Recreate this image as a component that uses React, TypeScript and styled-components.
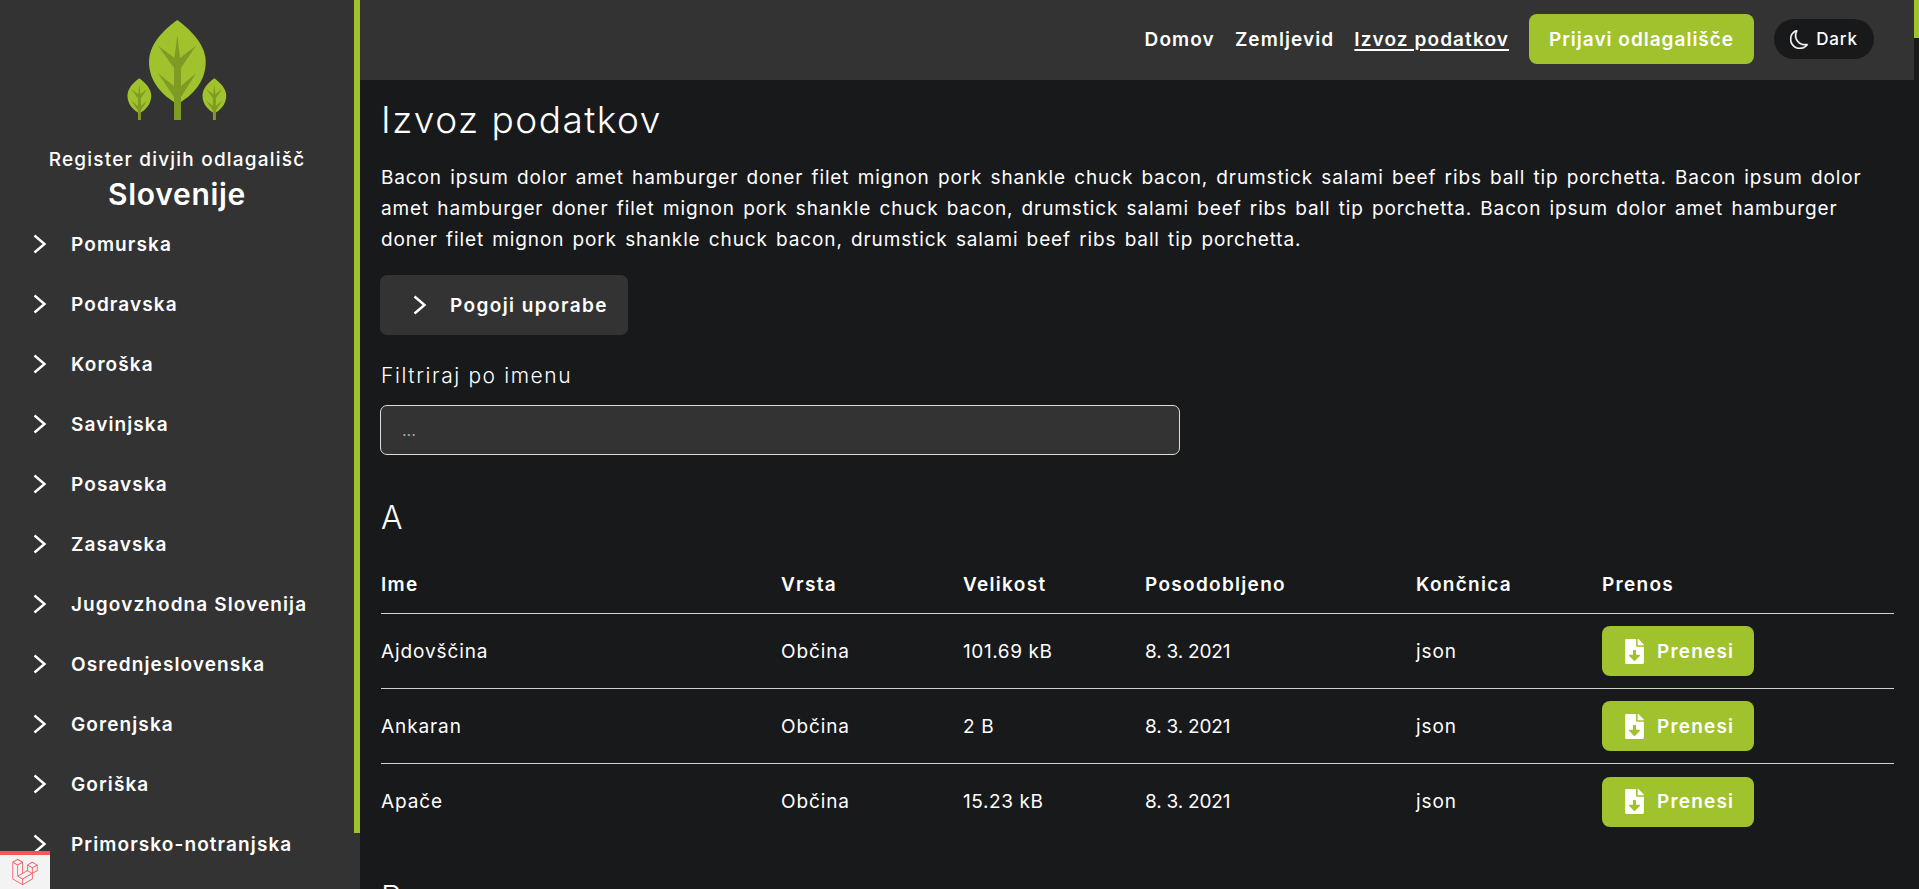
import React from 'react';
import styled, { createGlobalStyle } from 'styled-components';
import { BsMoon } from 'react-icons/bs';
import { FaFileDownload } from 'react-icons/fa';
import { SiLaravel } from 'react-icons/si';

const green = '#a0c22d';
const panel = '#333333';
const page = '#18191b';

const GlobalStyle = createGlobalStyle`
    * {
        box-sizing: border-box;
    }
    html, body {
        margin: 0;
        height: 100%;
        overflow: hidden;
        background: ${page};
        color: #fff;
        font-family: Inter, "Open Sans", "DejaVu Sans", sans-serif;
    }
`;

const Layout = styled.div`
    display: flex;
    height: 100vh;
`;

const Sidebar = styled.aside`
    position: relative;
    flex: 0 0 360px;
    height: 100%;
    overflow: hidden;
    background: ${panel};
    padding: 20px 6px 0 0;
`;

// the page's slim green scrollbars
const ScrollThumb = styled.div<{ $width: number; $height: number }>`
    position: absolute;
    top: 0;
    right: 0;
    width: ${p => p.$width}px;
    height: ${p => p.$height}px;
    background: ${green};
`;

const Brand = styled.div`
    display: flex;
    flex-direction: column;
    align-items: center;
    padding-bottom: 2px;
`;

const BrandLine = styled.div`
    margin-top: 28px;
    font-size: 19px;
    line-height: 24px;
    font-weight: 500;
    letter-spacing: 1.2px;
    white-space: nowrap;
`;

const BrandName = styled.div`
    margin-top: 4px;
    font-size: 30px;
    line-height: 36px;
    font-weight: 600;
    letter-spacing: 0.7px;
`;

const RegionItem = styled.a`
    display: flex;
    align-items: center;
    height: 60px;
    padding-left: 33px;
    gap: 24px;
    font-size: 19px;
    font-weight: 600;
    letter-spacing: 1.1px;
`;

const Main = styled.main`
    position: relative;
    flex: 1;
    min-width: 0;
    height: 100%;
    overflow: hidden;
    padding-right: 5px;
`;

const Header = styled.header`
    display: flex;
    align-items: center;
    justify-content: flex-end;
    height: 80px;
    padding: 0 40px 2px 0;
    background: ${panel};
`;

const NavLink = styled.a<{ $active?: boolean }>`
    margin-right: 20px;
    font-size: 19px;
    font-weight: 600;
    letter-spacing: 1.1px;
    text-decoration: ${p => (p.$active ? 'underline' : 'none')};
    text-decoration-thickness: 2px;
    text-underline-offset: 3px;
`;

const ReportButton = styled.button`
    width: 225px;
    height: 50px;
    border: 0;
    border-radius: 8px;
    background: ${green};
    color: #fff;
    font: inherit;
    font-size: 19px;
    font-weight: 600;
    letter-spacing: 1px;
`;

const ThemeToggle = styled.button`
    display: flex;
    align-items: center;
    justify-content: center;
    gap: 7px;
    width: 100px;
    height: 40px;
    margin-left: 20px;
    border: 0;
    border-radius: 20px;
    background: ${page};
    color: #fff;
    font: inherit;
    font-size: 17px;
    font-weight: 500;
    letter-spacing: 0.8px;
`;

const MoonIcon = styled(BsMoon)`
    width: 19px;
    height: 19px;
    stroke: currentColor;
    stroke-width: 0.4px;
`;

const Content = styled.div`
    padding: 16px 20px 0 21px;
`;

const Title = styled.h1`
    margin: 0;
    font-size: 37px;
    line-height: 48px;
    font-weight: 300;
    letter-spacing: 1.5px;
`;

const Intro = styled.p`
    margin: 18px 0 0;
    font-size: 19px;
    line-height: 31px;
    font-weight: 400;
    letter-spacing: 0.88px;
    word-spacing: 2px;
`;

const TermsButton = styled.button`
    display: flex;
    align-items: center;
    gap: 23px;
    width: 248px;
    height: 60px;
    margin: 20px 0 0 -1px;
    padding-left: 33px;
    border: 0;
    border-radius: 7px;
    background: ${panel};
    color: #fff;
    font: inherit;
    font-size: 19px;
    font-weight: 600;
    letter-spacing: 1.4px;
`;

const FilterLabel = styled.label`
    display: block;
    margin-top: 26px;
    font-size: 21px;
    line-height: 30px;
    font-weight: 300;
    letter-spacing: 1.6px;
`;

const FilterInput = styled.input`
    display: block;
    width: 800px;
    height: 50px;
    margin: 14px 0 4px -1px;
    padding: 0 21px;
    border: 1px solid #dcdcdc;
    border-radius: 7px;
    background: ${panel};
    color: #fff;
    font: inherit;
    font-size: 16px;

    &::placeholder {
        color: #a8a8a8;
    }
`;

const Section = styled.section`
    padding-top: 39px;
`;

const Letter = styled.h2`
    margin: 0 0 18px;
    font-size: 32px;
    line-height: 40px;
    font-weight: 300;
`;

const Row = styled.div<{ $last?: boolean }>`
    display: grid;
    grid-template-columns: 400px 182px 182px 271px 186px 1fr;
    align-items: center;
    height: 75px;
    border-bottom: ${p => (p.$last ? '0' : '1px solid #d2d2d2')};
    font-size: 19px;
    font-weight: 400;
    letter-spacing: 0.9px;
`;

const HeadRow = styled(Row)`
    height: 58px;
    font-weight: 600;
    letter-spacing: 1.3px;
`;

const SizeCell = styled.span`
    letter-spacing: 0.6px;
`;

const DateCell = styled.span`
    letter-spacing: -0.2px;
`;

const DownloadButton = styled.button`
    display: flex;
    align-items: center;
    gap: 13px;
    width: 152px;
    height: 50px;
    padding-left: 23px;
    border: 0;
    border-radius: 8px;
    background: ${green};
    color: #fff;
    font: inherit;
    font-size: 19px;
    font-weight: 600;
    letter-spacing: 1.2px;
`;

const FileIcon = styled(FaFileDownload)`
    width: 19px;
    height: 25px;
`;

const LaravelBadge = styled.div`
    position: fixed;
    left: 0;
    bottom: 0;
    display: flex;
    align-items: center;
    justify-content: center;
    width: 50px;
    height: 38px;
    border-top: 4px solid #f9545e;
    background: #f3f3f3;
    color: #f9545e;
`;

const Chevron: React.FC = () => (
    <svg width="14" height="20" viewBox="0 0 14 20" fill="none">
        <polyline points="1.5,1.5 11.5,10 1.5,18.5" stroke="#fff" strokeWidth="2.4" />
    </svg>
);

const Leaf: React.FC = () => (
    <>
        <path
            fill={green}
            d="M50.3 0C35 11 22 25 22 42C22 62 36 76 50.3 84C65 76 78.7 62 78.7 42C78.7 25 65 11 50.3 0Z"
        />
        <path
            fill="#7f9b24"
            d="M50.3 15L53 38L69 25.7L54 48V66L69 53.3L54 77V100H47V77L31 53.3L47 66V48L31 25.7L47.5 38Z"
        />
    </>
);

const Logo: React.FC = () => (
    <svg width="100" height="100" viewBox="0 0 100 100">
        <Leaf />
        <g transform="translate(-8.8 58.2) scale(0.42)">
            <Leaf />
        </g>
        <g transform="translate(66.2 58.2) scale(0.42)">
            <Leaf />
        </g>
    </svg>
);

const regions = [
    'Pomurska',
    'Podravska',
    'Koroška',
    'Savinjska',
    'Posavska',
    'Zasavska',
    'Jugovzhodna Slovenija',
    'Osrednjeslovenska',
    'Gorenjska',
    'Goriška',
    'Primorsko-notranjska',
];

const bacon =
    'Bacon ipsum dolor amet hamburger doner filet mignon pork shankle chuck bacon, drumstick salami beef ribs ball tip porchetta. ';

const files = [
    { name: 'Ajdovščina', size: '101.69 kB' },
    { name: 'Ankaran', size: '2 B' },
    { name: 'Apače', size: '15.23 kB' },
];

const App: React.FC = () => {
    return (
        <Layout>
            <GlobalStyle />
            <Sidebar>
                <Brand>
                    <Logo />
                    <BrandLine>Register divjih odlagališč</BrandLine>
                    <BrandName>Slovenije</BrandName>
                </Brand>
                {regions.map(region => (
                    <RegionItem key={region}>
                        <Chevron />
                        {region}
                    </RegionItem>
                ))}
                <ScrollThumb $width={6} $height={833} />
            </Sidebar>
            <Main>
                <Header>
                    <NavLink>Domov</NavLink>
                    <NavLink>Zemljevid</NavLink>
                    <NavLink $active>Izvoz podatkov</NavLink>
                    <ReportButton>Prijavi odlagališče</ReportButton>
                    <ThemeToggle>
                        <MoonIcon />
                        Dark
                    </ThemeToggle>
                </Header>
                <Content>
                    <Title>Izvoz podatkov</Title>
                    <Intro>{bacon + bacon + bacon}</Intro>
                    <TermsButton>
                        <Chevron />
                        Pogoji uporabe
                    </TermsButton>
                    <FilterLabel htmlFor="filter">Filtriraj po imenu</FilterLabel>
                    <FilterInput id="filter" placeholder="..." />
                    <Section>
                        <Letter>A</Letter>
                        <HeadRow>
                            <span>Ime</span>
                            <span>Vrsta</span>
                            <span>Velikost</span>
                            <span>Posodobljeno</span>
                            <span>Končnica</span>
                            <span>Prenos</span>
                        </HeadRow>
                        {files.map((file, i) => (
                            <Row key={file.name} $last={i === files.length - 1}>
                                <span>{file.name}</span>
                                <span>Občina</span>
                                <SizeCell>{file.size}</SizeCell>
                                <DateCell>8. 3. 2021</DateCell>
                                <span>json</span>
                                <DownloadButton>
                                    <FileIcon />
                                    Prenesi
                                </DownloadButton>
                            </Row>
                        ))}
                    </Section>
                    <Section>
                        <Letter>B</Letter>
                    </Section>
                </Content>
                <ScrollThumb $width={5} $height={38} />
            </Main>
            <LaravelBadge>
                <SiLaravel size={26} />
            </LaravelBadge>
        </Layout>
    );
};

export default App;
